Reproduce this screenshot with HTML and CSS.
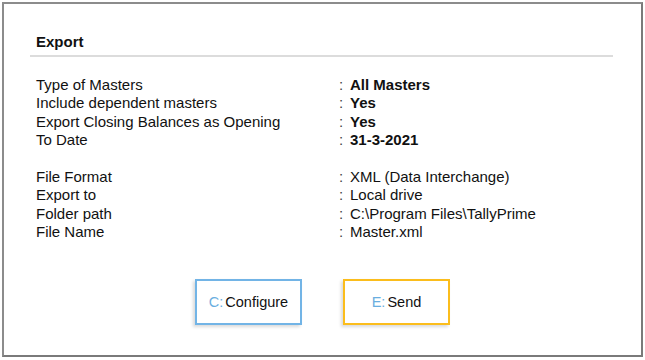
FILE: index.html
```html
<!DOCTYPE HTML>
<html>
	<head>
		<title>Export</title>
		<meta name="viewport" content="width=device-width, initial-scale=1.0">
		<link rel="stylesheet" href="styles.css">
	</head>
	<body>
	<div class="panel">
		<header class="panel-title">
			<h1>Export</h1>
		</header>
		<div class="fields">
			<span class="label">Type of Masters</span><span class="sep">:</span><span class="value strong">All Masters</span>
			<span class="label">Include dependent masters</span><span class="sep">:</span><span class="value strong">Yes</span>
			<span class="label">Export Closing Balances as Opening</span><span class="sep">:</span><span class="value strong">Yes</span>
			<span class="label">To Date</span><span class="sep">:</span><span class="value strong">31-3-2021</span>
		</div>
		<div class="fields group">
			<span class="label">File Format</span><span class="sep">:</span><span class="value">XML (Data Interchange)</span>
			<span class="label">Export to</span><span class="sep">:</span><span class="value">Local drive</span>
			<span class="label">Folder path</span><span class="sep">:</span><span class="value">C:\Program Files\TallyPrime</span>
			<span class="label">File Name</span><span class="sep">:</span><span class="value">Master.xml</span>
		</div>
		<div class="actions">
			<button class="btn configure"><span class="key">C:</span>Configure</button>
			<button class="btn send"><span class="key">E:</span>Send</button>
		</div>
	</div>
	</body>
</html>
```

FILE: styles.css
```css
html{
	height: 100%;
}

body{
	margin: 0;
	background: #ffffff;
	font-family: "Liberation Sans", Arial, sans-serif;
	font-size: 15px;
	color: #111111;
}

.panel{
	box-sizing: border-box;
	width: 641px;
	height: 355px;
	margin: 2px;
	padding: 30px 28px 0 26px;
	border: 2px solid #8c8c8c;
	border-right-color: #7a7a7a;
	border-bottom-color: #7a7a7a;
	background: #ffffff;
}

.panel-title{
	padding: 0 0 5px 6px;
	border-bottom: 2px solid #dcdcdc;
}

h1{
	margin: 0;
	font-size: 15px;
	line-height: 16px;
	font-weight: bold;
}

.fields{
	display: grid;
	grid-template-columns: 303px 11px 1fr;
	padding-left: 6px;
	margin-top: 19px;
	line-height: 18.4px;
}

.fields.group{
	margin-top: 18.4px;
}

.sep{
	color: #444444;
}

.strong{
	font-weight: bold;
}

.actions{
	display: flex;
	justify-content: center;
	gap: 41px;
	margin-top: 37px;
	padding-left: 2px;
}

.btn{
	box-sizing: border-box;
	width: 107px;
	height: 46px;
	background: #ffffff;
	font-family: "Liberation Sans", Arial, sans-serif;
	font-size: 14.5px;
	color: #111111;
	box-shadow: -2px 2px 3px rgba(0, 0, 0, 0.15);
	cursor: pointer;
	padding: 0;
}

.btn .key{
	color: #6aaee0;
	margin-right: 2px;
}

.configure{
	border: 2px solid #72b4e6;
}

.send{
	border: 2px solid #fbbd1c;
}
```
